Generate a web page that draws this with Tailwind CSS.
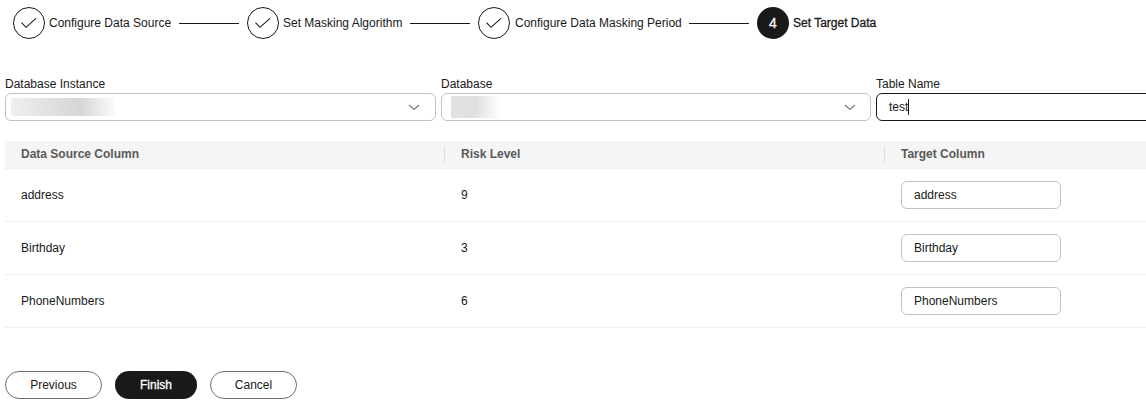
<!DOCTYPE html>
<html lang="en">
<head>
  <meta charset="UTF-8" />
  <title>Set Target Data</title>
  <script src="https://cdn.jsdelivr.net/npm/@tailwindcss/browser@4"></script>
</head>
<body class="bg-white text-[#191919] text-[12px] font-['Liberation_Sans',Arial,sans-serif] overflow-hidden">
  <div class="w-[1146px] h-[412px] overflow-hidden pl-[5px]">
    <!-- steps -->
    <div class="flex items-center h-[32px] mt-[7px] pl-[8px]">
      <div class="w-[32px] h-[32px] rounded-full border border-[#191919] flex items-center justify-center shrink-0">
        <svg width="16" height="16" viewBox="0 0 16 16" fill="none" stroke="#191919" stroke-width="1.1"><path d="M0.5 7.7 L5 12.3 L15 3.3"/></svg>
      </div>
      <span class="ml-[4px] w-[130px] -mt-[1px]">Configure Data Source</span>
      <div class="w-[60px] h-px bg-[#191919]"></div>
      <div class="ml-[8px] w-[32px] h-[32px] rounded-full border border-[#191919] flex items-center justify-center shrink-0">
        <svg width="16" height="16" viewBox="0 0 16 16" fill="none" stroke="#191919" stroke-width="1.1"><path d="M0.5 7.7 L5 12.3 L15 3.3"/></svg>
      </div>
      <span class="ml-[4px] w-[127px] -mt-[1px]">Set Masking Algorithm</span>
      <div class="w-[60px] h-px bg-[#191919]"></div>
      <div class="ml-[8px] w-[32px] h-[32px] rounded-full border border-[#191919] flex items-center justify-center shrink-0">
        <svg width="16" height="16" viewBox="0 0 16 16" fill="none" stroke="#191919" stroke-width="1.1"><path d="M0.5 7.7 L5 12.3 L15 3.3"/></svg>
      </div>
      <span class="ml-[5px] w-[174px] -mt-[1px]">Configure Data Masking Period</span>
      <div class="w-[60px] h-px bg-[#191919]"></div>
      <div class="ml-[8px] w-[32px] h-[32px] rounded-full bg-[#191919] text-white text-[14px] [-webkit-text-stroke:0.3px_white] flex items-center justify-center shrink-0">4</div>
      <span class="ml-[4px] -mt-[1px] [-webkit-text-stroke:0.3px_#191919]">Set Target Data</span>
    </div>

    <!-- filters -->
    <div class="flex gap-[5px] mt-[38px] w-[1170px]">
      <div class="w-[431px]">
        <div class="h-[15px] leading-[15px]">Database Instance</div>
        <div class="mt-[1px] h-[28px] border border-[#c2c2c2] rounded-[6px] flex items-center pl-[5px] pr-[15px] justify-between">
          <div class="w-[104px] h-[18px] bg-gradient-to-r from-[#efefef] via-[#d6d6d6] via-[66%] to-[#fbfbfb]"></div>
          <svg width="12" height="12" viewBox="0 0 12 12" fill="none" stroke="#7a7a7a" stroke-width="1.1"><path d="M1 4 L6 8.5 L11 4"/></svg>
        </div>
      </div>
      <div class="w-[430px]">
        <div class="h-[15px] leading-[15px]">Database</div>
        <div class="mt-[1px] h-[28px] border border-[#c2c2c2] rounded-[6px] flex items-center pl-[9px] pr-[14px] justify-between">
          <div class="w-[50px] h-[22px] -mt-[1px] bg-gradient-to-r from-[#e2e2e2] via-[#e0e0e0] to-[#ffffff]"></div>
          <svg width="12" height="12" viewBox="0 0 12 12" fill="none" stroke="#7a7a7a" stroke-width="1.1"><path d="M1 4 L6 8.5 L11 4"/></svg>
        </div>
      </div>
      <div class="w-[290px]">
        <div class="h-[15px] leading-[15px]">Table Name</div>
        <div class="mt-[1px] h-[28px] border border-[#191919] rounded-[6px] flex items-center pl-[12px]">
          <span>test</span><span class="w-px h-[16px] bg-[#191919]"></span>
        </div>
      </div>
    </div>

    <!-- table -->
    <div class="mt-[20px] w-[1141px]">
      <div class="grid grid-cols-[440px_440px_261px] h-[28px] bg-[#f5f5f5] border-b border-[#eeeeee] items-center font-bold text-[#595959]">
        <div class="pl-[16px] border-r border-[#dfdfdf] h-[16px] leading-[14px]">Data Source Column</div>
        <div class="pl-[16px] border-r border-[#dfdfdf] h-[16px] leading-[14px]">Risk Level</div>
        <div class="pl-[16px] h-[16px] leading-[14px]">Target Column</div>
      </div>
      <div class="grid grid-cols-[440px_440px_261px] h-[53px] border-b border-[#eeeeee] items-center">
        <div class="pl-[16px]">address</div>
        <div class="pl-[16px]">9</div>
        <div class="pl-[16px]"><div class="w-[160px] h-[28px] border border-[#c2c2c2] rounded-[6px] pl-[12px] leading-[26px]">address</div></div>
      </div>
      <div class="grid grid-cols-[440px_440px_261px] h-[53px] border-b border-[#eeeeee] items-center">
        <div class="pl-[16px]">Birthday</div>
        <div class="pl-[16px]">3</div>
        <div class="pl-[16px]"><div class="w-[160px] h-[28px] border border-[#c2c2c2] rounded-[6px] pl-[12px] leading-[26px]">Birthday</div></div>
      </div>
      <div class="grid grid-cols-[440px_440px_261px] h-[53px] border-b border-[#eeeeee] items-center">
        <div class="pl-[16px]">PhoneNumbers</div>
        <div class="pl-[16px]">6</div>
        <div class="pl-[16px]"><div class="w-[160px] h-[28px] border border-[#c2c2c2] rounded-[6px] pl-[12px] leading-[26px]">PhoneNumbers</div></div>
      </div>
    </div>

    <!-- actions -->
    <div class="flex gap-[13px] mt-[43px]">
      <button class="w-[97px] h-[28px] rounded-full border border-[#6e6e6e]">Previous</button>
      <button class="w-[82px] h-[28px] rounded-full bg-[#191919] text-white [-webkit-text-stroke:0.3px_white]">Finish</button>
      <button class="w-[87px] h-[28px] rounded-full border border-[#6e6e6e]">Cancel</button>
    </div>
  </div>
</body>
</html>
